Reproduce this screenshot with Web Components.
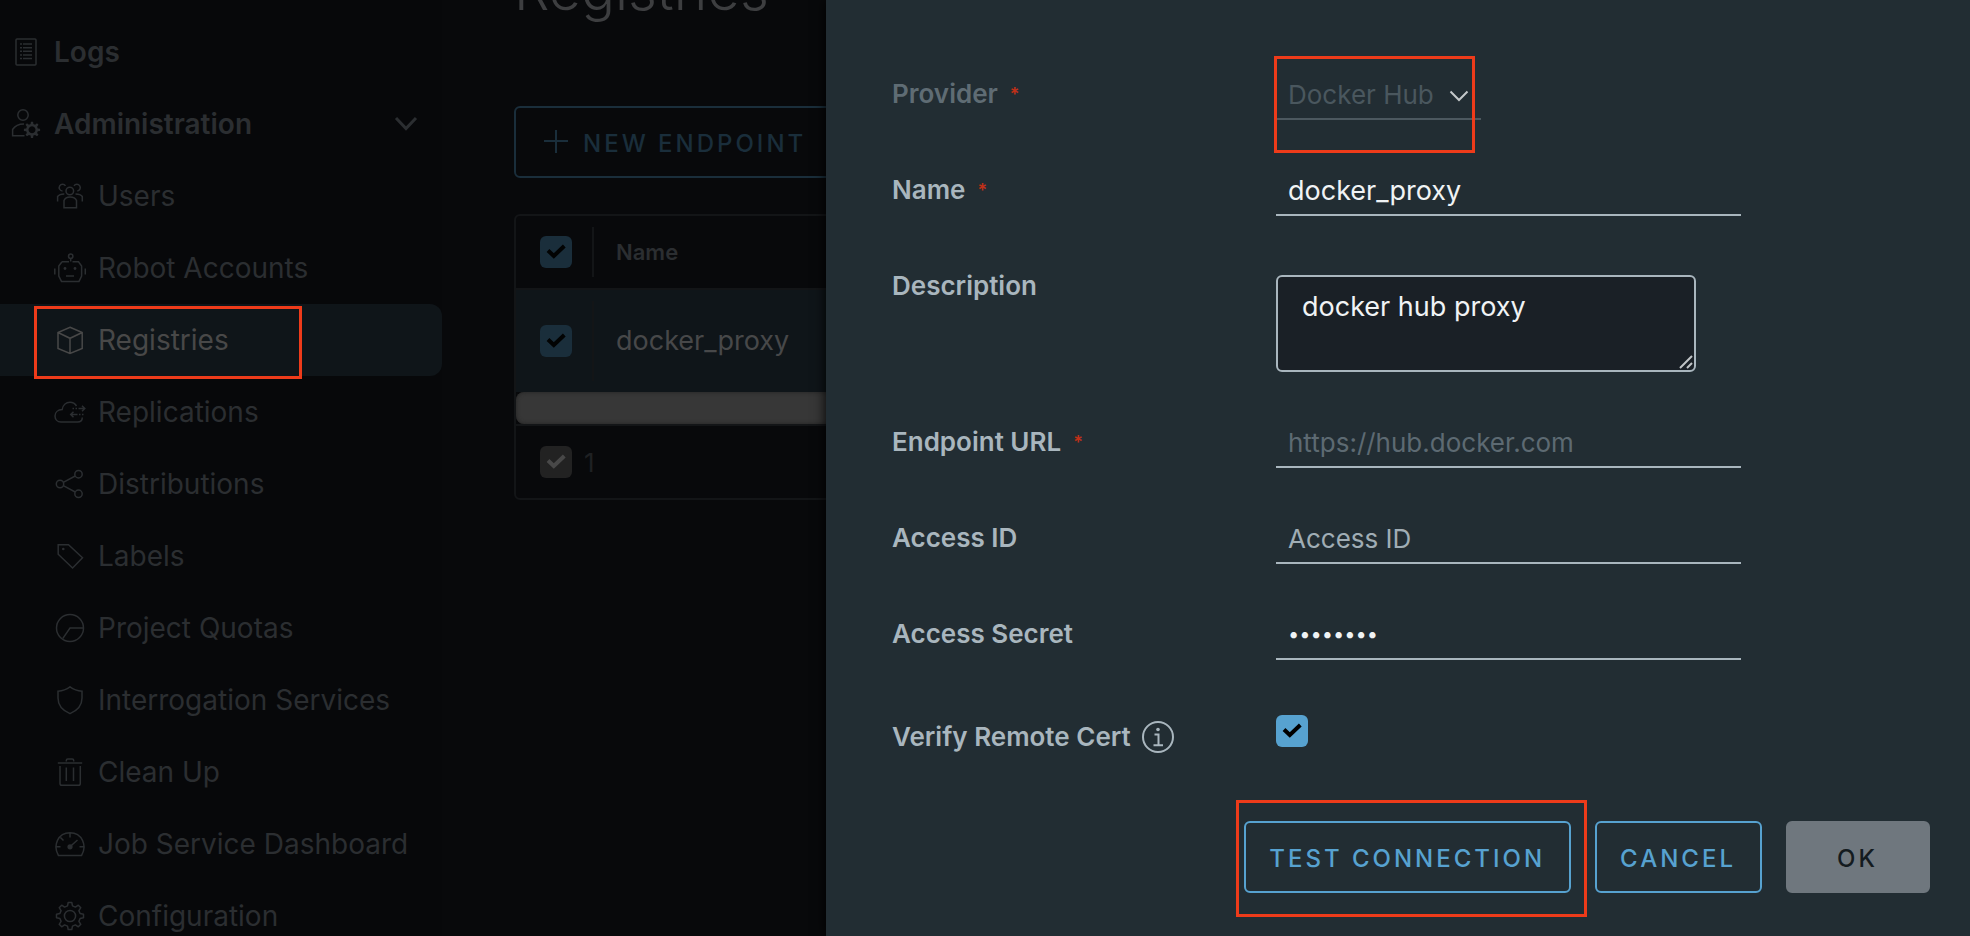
<!DOCTYPE html>
<html lang="en">
<head>
<meta charset="utf-8">
<title>Harbor - Registries</title>
<style>
  html, body { height: 100%; margin: 0; }
  body {
    overflow: hidden;
    background: #08090b;
    font-family: Inter, "Liberation Sans", sans-serif;
    font-size: 26px;
    --nav-text: #2b2e31;
    --accent: #57a2d0;
    --accent-dim: #1a2e3b;
    --label: #a9b6be;
    --rule: #131517;
    --panel: #222d33;
    --mark: #ee3b1a;
  }
</style>
</head>
<body>
<hb-page>
  <hb-nav slot="nav">
    <hb-nav-item icon="logs" level="top">Logs</hb-nav-item>
    <hb-nav-item icon="admin" level="top" expandable>Administration</hb-nav-item>
    <hb-nav-item icon="users">Users</hb-nav-item>
    <hb-nav-item icon="robot">Robot Accounts</hb-nav-item>
    <hb-nav-item icon="cube" active>Registries</hb-nav-item>
    <hb-nav-item icon="cloud">Replications</hb-nav-item>
    <hb-nav-item icon="share">Distributions</hb-nav-item>
    <hb-nav-item icon="tag">Labels</hb-nav-item>
    <hb-nav-item icon="quota">Project Quotas</hb-nav-item>
    <hb-nav-item icon="shield">Interrogation Services</hb-nav-item>
    <hb-nav-item icon="trash">Clean Up</hb-nav-item>
    <hb-nav-item icon="gauge">Job Service Dashboard</hb-nav-item>
    <hb-nav-item icon="gear">Configuration</hb-nav-item>
  </hb-nav>
  <hb-registries></hb-registries>
  <hb-side-panel slot="panel">
    <hb-field type="select" label="Provider" value="Docker Hub" required disabled></hb-field>
    <hb-field type="text" label="Name" value="docker_proxy" required></hb-field>
    <hb-field type="textarea" label="Description" value="docker hub proxy"></hb-field>
    <hb-field type="text" label="Endpoint URL" placeholder="https://hub.docker.com" required disabled></hb-field>
    <hb-field type="text" label="Access ID" placeholder="Access ID"></hb-field>
    <hb-field type="password" label="Access Secret" value="password"></hb-field>
    <hb-field type="checkbox" label="Verify Remote Cert" info></hb-field>
    <hb-button slot="actions" marked>TEST CONNECTION</hb-button>
    <hb-button slot="actions">CANCEL</hb-button>
    <hb-button slot="actions" kind="disabled">OK</hb-button>
  </hb-side-panel>
</hb-page>

<script>
const gearPath = (cx, cy, ro, ri, teeth) => {
  const step = Math.PI * 2 / teeth, pts = [];
  for (let i = 0; i < teeth; i++) {
    const a = i * step - Math.PI / 2;
    for (const [k, r] of [[-.31, ri], [-.17, ro], [.17, ro], [.31, ri]]) {
      pts.push((cx + r * Math.cos(a + k * step)).toFixed(1) + ' ' + (cy + r * Math.sin(a + k * step)).toFixed(1));
    }
  }
  return 'M' + pts.join('L') + 'Z';
};

const ICONS = {
  logs: '<rect x="6" y="3" width="20" height="26" rx="1"/><path d="M10 8h2M13 8h9M10 11.7h2M13 11.7h9M10 15.3h2M13 15.3h9M10 19h2M13 19h9M10 22.5h2M13 22.5h9"/>',
  admin: '<circle cx="13" cy="7" r="5.2"/><path d="M14 16C8.500 16 4.500 18.500 2.600 21.500V27.800H14.500"/><path fill="currentColor" fill-rule="evenodd" stroke="none" d="' + gearPath(22, 21.8, 8.2, 6, 8) + 'M22 18.300a3.500 3.500 0 1 0 .01 0Z"/>',
  users: '<circle cx="15.800" cy="11" r="3.800"/><path d="M10 27.700V20.500C11 18 13 17 16 17S21.500 18 22.500 20.500V27.700ZM11.500 5.800A3.400 3.400 0 1 0 8.500 11M20 5.800A3.400 3.400 0 1 1 23.300 11M3.600 21.500V16.500C5 14.500 7 13.900 10.300 13.900M28.300 21.500V16.500C27 14.500 25 13.900 21.500 13.900"/>',
  robot: '<circle cx="16.700" cy="4.300" r="2.200"/><path d="M16.700 6.500V9.500M8 9.700H15M18.500 9.700H24.500L27.600 14V24L25 29.400H7.500L4.800 24V14L8 9.700M.8 16.500V22.500M31.300 16.500V22.500M12 24H20"/><circle cx="11" cy="16.500" r="1.400" fill="currentColor" stroke="none"/><circle cx="21" cy="16.500" r="1.400" fill="currentColor" stroke="none"/>',
  cube: '<path d="M16 3.300L28.200 8.500V24.500L16 29.500L4 24.500V8.500ZM4 8.500L16 14.300L28.200 8.500M16 14.300V29.500"/>',
  cloud: '<path d="M22.500 10C21 7.500 18.800 6.300 16 6.300C12 6.300 8.800 9.200 8.200 13.500C4 13.700 1 16.300 1 20C1 23.500 3.500 26 7 26H23.500C26.500 26 28.300 24 28.300 21.500"/><path d="M18.500 12.500H20M21.500 12.500H23M24.500 12.500H30.500M28 9.700L30.800 12.500L28 15.300M29.500 18.500H28M26.500 18.500H25M23.500 18.500H17M19.500 15.700L16.700 18.500L19.500 21.300"/>',
  share: '<circle cx="6" cy="16" r="3.700"/><circle cx="24.500" cy="6.200" r="3.700"/><circle cx="24.500" cy="25.800" r="3.700"/><path d="M9.300 14.300L21.200 8M9.300 17.700L21.200 24"/>',
  tag: '<path d="M4.200 4.700H14.500L28.500 17.800L18.600 28L4.200 14.200Z"/><circle cx="9.300" cy="9" r="1.300" fill="currentColor" stroke="none"/>',
  quota: '<circle cx="16" cy="16" r="13.500"/><path d="M29.500 16H16L8.700 26.700"/>',
  shield: '<path d="M16 2.800C19 5 23.500 6.800 28 7.200V14C28 21.500 23.500 26.500 16 29.600C8.500 26.500 4 21.500 4 14V7.200C8.500 6.800 13 5 16 2.800Z"/>',
  trash: '<path d="M3.800 7H28.200M12.300 5.500V4.500Q12.300 3 13.800 3H18.200Q19.700 3 19.700 4.500V5.500M6 10V27.500Q6 29.300 7.800 29.300H24.500Q26.300 29.300 26.300 27.500V10M12.300 11.500V25M19.500 11.500V25"/>',
  gauge: '<path d="M4.500 27.600C-1.500 17.500 4 4.700 16 4.700S33.500 17.500 27.500 27.600ZM16 5V9.500M6.500 9.500L9.500 12.500M2.500 18.700H6.500M25.500 18.700H29.500M16.500 18.200L23.500 12"/><circle cx="16" cy="18.800" r="2.600" fill="currentColor" stroke="none"/>',
  gear: '<path stroke-linejoin="round" d="' + gearPath(16, 16, 13.6, 10.4, 8) + '"/><circle cx="16" cy="16" r="5.600"/>'
};

const define = (name, setup) => customElements.define(name, class extends HTMLElement {
  constructor() { super(); this.attachShadow({ mode: 'open' }); }
  connectedCallback() { if (!this.shadowRoot.hasChildNodes()) this.shadowRoot.innerHTML = setup(this); }
});

/* Line icon on a 32px grid, drawn in the current colour. */
define('hb-icon', el => `
  <style>
    :host { display: block; width: 32px; height: 32px; flex: none; }
    svg { display: block; fill: none; stroke: currentColor; stroke-width: 1.5; }
  </style>
  <svg viewBox="0 0 32 32" width="32" height="32" aria-hidden="true">${ICONS[el.getAttribute('name')]}</svg>`);

/* Rectangular callout laid over whatever it marks. */
define('hb-callout', () => `
  <style>
    :host { display: block; position: absolute; box-sizing: border-box; border: 3px solid var(--mark); pointer-events: none; z-index: 2; }
  </style>`);

const checkbox = (attrs = '') => `
  <span class="check"><input type="checkbox" checked ${attrs}><svg viewBox="0 0 32 32" width="32" height="32" aria-hidden="true"><path d="M8 14.500L13.800 20L24.300 10"/></svg></span>`;
const checkboxCss = `
  .check { display: grid; width: 32px; height: 32px; }
  .check > * { grid-area: 1 / 1; }
  .check input { appearance: none; width: 32px; height: 32px; margin: 0; border-radius: 6px; background: var(--box); }
  .check svg { fill: none; stroke: var(--tick); stroke-width: 4; pointer-events: none; }`;

define('hb-nav-item', el => {
  const top = el.getAttribute('level') === 'top';
  const tag = el.hasAttribute('expandable') ? 'button type="button" aria-expanded="true"' : 'a href="#"';
  return `
  <style>
    :host { display: block; position: relative; }
    a, button {
      display: flex; align-items: center; gap: 12px; box-sizing: border-box; width: 100%; height: 72px;
      padding: 0 24px 0 ${top ? 10 : 54}px; border: 0; border-radius: 0 12px 12px 0; background: none;
      color: var(--nav-text); font: ${top ? 600 : 400} 28px/36px Inter, "Liberation Sans", sans-serif;
      text-align: left; text-decoration: none; white-space: nowrap;
    }
    :host([active]) a { background: #0f1519; color: #484848; }
    .text { flex: 1; }
    .chev { fill: none; stroke: currentColor; stroke-width: 3; }
    hb-callout { inset: 2px auto auto 34px; width: 268px; height: 73px; }
  </style>
  <${tag}><hb-icon name="${el.getAttribute('icon')}"></hb-icon><span class="text"><slot></slot></span>
    ${el.hasAttribute('expandable') ? '<svg class="chev" width="24" height="16" viewBox="0 0 24 16"><path d="M2 2L12 12.500L22 2"/></svg>' : ''}
  </${tag.split(' ')[0]}>
  ${el.hasAttribute('active') ? '<hb-callout></hb-callout>' : ''}`;
});

define('hb-nav', () => `
  <style>
    :host { display: block; background: #07080a; height: 100%; overflow: hidden; }
    nav { padding-top: 16px; }
  </style>
  <nav><slot></slot></nav>`);

define('hb-button', el => `
  <style>
    :host { display: block; position: relative; }
    button {
      display: flex; align-items: center; justify-content: center; gap: 12px; box-sizing: border-box; height: 72px; min-width: 144px; padding: 4px 24px 0 23px;
      border: 2px solid var(--btn, var(--accent)); border-radius: 6px; background: none; color: var(--btn, var(--accent));
      font: 500 24px/32px Inter, "Liberation Sans", sans-serif; letter-spacing: 3px; white-space: nowrap;
    }
    :host([kind="disabled"]) button { background: #6f777e; border-color: #6f777e; color: #141b1f; }
    hb-callout { inset: -21px auto auto -8px; width: 351px; height: 117px; }
  </style>
  <button type="button" ${el.getAttribute('kind') === 'disabled' ? 'disabled' : ''}><slot></slot></button>
  ${el.hasAttribute('marked') ? '<hb-callout></hb-callout>' : ''}`);

/* List view behind the panel. */
define('hb-registries', () => `
  <style>
    :host { display: block; padding: 0 48px 0 72px; --box: var(--accent-dim); --tick: #020303; }
    h1 { margin: -38px 0 88px; color: #3d3e40; font-size: 56px; line-height: 56px; font-weight: 300; }
    .bar { display: flex; margin-bottom: 36px; --btn: var(--accent-dim); }
    .plus { stroke: currentColor; stroke-width: 2; }
    .grid { border: 2px solid var(--rule); border-radius: 6px; overflow: hidden; }
    table { width: 100%; border-collapse: separate; border-spacing: 0; }
    th, td { box-sizing: border-box; padding: 0 22px; text-align: left; border-bottom: 2px solid var(--rule); }
    .pick { width: 78px; padding: 0 0 0 24px; background: linear-gradient(var(--rule), var(--rule)) no-repeat right center / 2px 50px; }
    thead th { height: 74px; color: #2b2e31; font-size: 22px; line-height: 28px; font-weight: 600; }
    tbody td { height: 102px; color: #474849; border-bottom: 0; font-size: 27px; line-height: 36px; }
    tbody tr { background: #0f1519; }
    tbody .pick { background-size: 2px 80px; }
    .scroll { height: 32px; border-radius: 8px; background: #373737; box-shadow: inset 0 0 4px #222; }
    footer { display: flex; align-items: center; gap: 12px; height: 72px; padding: 0 24px; border-top: 2px solid var(--rule); color: #1f2123; font-size: 26px; --box: #222; --tick: #484848; }
    ${checkboxCss}
  </style>
  <h1>Registries</h1>
  <div class="bar"><hb-button><svg class="plus" width="32" height="28" viewBox="0 0 32 28" aria-hidden="true"><path d="M5 11H29M17 0V23"/></svg>NEW ENDPOINT</hb-button></div>
  <div class="grid">
    <table>
      <thead><tr><th class="pick">${checkbox('aria-label="Select all"')}</th><th>Name</th></tr></thead>
      <tbody><tr><td class="pick">${checkbox('aria-label="Select docker_proxy"')}</td><td>docker_proxy</td></tr></tbody>
    </table>
    <div class="scroll"></div>
    <footer>${checkbox('disabled aria-label="Selected rows"')}<span>1</span></footer>
  </div>`);

/* Label and control pair; the label points at the control by id. */
define('hb-field', el => {
  const type = el.getAttribute('type'), value = el.getAttribute('value') || '', label = el.getAttribute('label');
  const off = el.hasAttribute('disabled') ? 'disabled' : '';
  const control = {
    select: () => `<div class="select"><select id="c" ${off}><option>${value}</option></select>
      <svg width="20" height="12" viewBox="0 0 20 12" aria-hidden="true"><path d="M1.500 1.500L10 10L18.500 1.500"/></svg><hb-callout></hb-callout></div>`,
    textarea: () => `<div class="area"><textarea id="c">${value}</textarea>
      <svg width="14" height="14" viewBox="0 0 14 14" aria-hidden="true"><path d="M1 13L13 1M8 13L13 8"/></svg></div>`,
    checkbox: () => checkbox('id="c"')
  }[type] || (() => `<input class="line" id="c" type="${type}" value="${value}" placeholder="${el.getAttribute('placeholder') || ''}" ${off}>`);
  return `
  <style>
    :host { display: grid; grid-template-columns: 384px 1fr; align-items: start; --box: var(--accent); --tick: #000; }
    :host([type="checkbox"]) { padding-top: 7px; }
    label { color: var(--label); font-weight: 600; line-height: 48px; display: flex; align-items: center; }
    :host([type="select"]) label { color: #5f6c74; }
    i { margin: 2px 0 0 12px; color: #c03018; font-size: 18px; line-height: 24px; font-style: normal; font-weight: 600; }
    .info { fill: none; stroke: currentColor; stroke-width: 2; margin-left: 10px; }
    .line, select, textarea { box-sizing: border-box; margin: 0; outline: 0; color: #f0f3f5; font: 400 27px/36px Inter, "Liberation Sans", sans-serif; }
    .line { width: 465px; max-width: 100%; height: 50px; padding: 0 12px; border: 0; border-bottom: 2px solid var(--label); background: none; }
    .line[type="password"] { font-size: 20px; }
    .line::placeholder { color: #a0adb5; font-size: 26px; }
    .line:disabled::placeholder { color: #5d6a72; }
    .select { position: relative; width: 205px; }
    select { appearance: none; width: 100%; height: 50px; padding: 2px 12px 0; border: 0; border-bottom: 2px solid #4c585f; border-radius: 0; background: none; color: #4a575e; font-size: 26px; opacity: 1; }
    .select svg { position: absolute; right: 12px; top: 20px; fill: none; stroke: #c4c8ca; stroke-width: 2; }
    .select hb-callout { inset: -14px auto auto -2px; width: 201px; height: 97px; }
    .area { position: relative; width: 420px; max-width: 100%; margin-top: 13px; }
    textarea { display: block; width: 100%; height: 97px; padding: 12px 24px; border: 2px solid var(--label); border-radius: 6px; background: #1a2026; resize: none; }
    .area svg { position: absolute; right: 3px; bottom: 3px; fill: none; stroke: #c0c4c6; stroke-width: 2; }
    .check { margin-top: 2px; }
    ${checkboxCss}
  </style>
  <label for="c">${label}${el.hasAttribute('required') ? '<i>*</i>' : ''}${el.hasAttribute('info')
    ? '<svg class="info" width="34" height="34" viewBox="0 0 34 34" aria-hidden="true"><circle cx="17" cy="17" r="15"/><path d="M13.500 14.500H17.500V25M12.500 25.300H22"/><circle cx="17" cy="9.500" r="1.800" fill="currentColor" stroke="none"/></svg>' : ''}</label>
  ${control()}`;
});

define('hb-side-panel', () => `
  <style>
    :host { display: block; box-sizing: border-box; background: var(--panel); padding: 70px 40px 0 66px; box-shadow: 0 0 12px #000; }
    form { display: grid; gap: 46px; }
    .actions { display: flex; justify-content: flex-end; gap: 24px; margin-top: 60px; }
  </style>
  <form><slot></slot></form>
  <div class="actions"><slot name="actions"></slot></div>`);

define('hb-page', () => `
  <style>
    :host { display: grid; grid-template-columns: 442px minmax(0, 1fr); height: 100vh; position: relative; overflow: hidden; }
    main { min-width: 0; }
    ::slotted([slot="panel"]) { position: absolute; inset: 0 0 0 826px; z-index: 1; }
  </style>
  <slot name="nav"></slot>
  <main><slot></slot></main>
  <slot name="panel"></slot>`);
</script>
</body>
</html>
